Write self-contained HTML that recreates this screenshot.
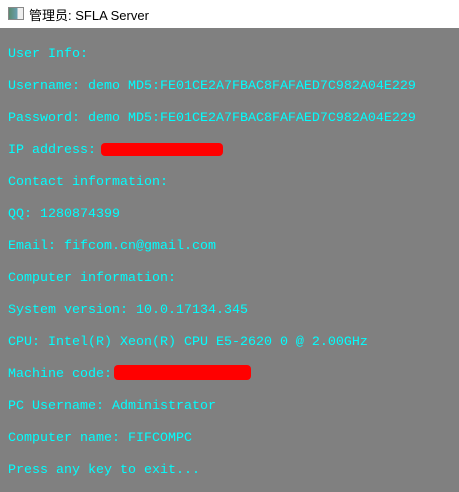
<!DOCTYPE html>
<html><head><meta charset="utf-8"><style>
html,body{margin:0;padding:0;width:459px;height:492px;overflow:hidden;background:#808080;position:relative}
.tb{position:absolute;left:0;top:0;width:459px;height:28px;background:#fff;font:13px "Liberation Sans","Noto Sans CJK SC",sans-serif;color:#000}
.tb span{position:absolute;left:29px;top:5px;white-space:nowrap}
.ic{position:absolute;left:8px;top:7px;width:14px;height:11px;border:1px solid #888;background:linear-gradient(90deg,#5a8a70 0,#6a9fb0 60%,#eee 60%)}
.l{position:absolute;left:8px;font:13.33px "Liberation Mono",monospace;color:#00ffff;white-space:pre;line-height:16px}
.r{position:absolute;background:#ff0000;border-radius:4px}
</style></head><body>
<div class="tb"><div class="ic"></div><span>管理员:&nbsp;SFLA Server</span></div>
<div class="l" style="top:47px">User Info:</div>
<div class="l" style="top:79px">Username: demo MD5:FE01CE2A7FBAC8FAFAED7C982A04E229</div>
<div class="l" style="top:111px">Password: demo MD5:FE01CE2A7FBAC8FAFAED7C982A04E229</div>
<div class="l" style="top:143px">IP address:</div>
<div class="r" style="left:101px;top:143px;width:122px;height:13px"></div>
<div class="l" style="top:175px">Contact information:</div>
<div class="l" style="top:207px">QQ: 1280874399</div>
<div class="l" style="top:239px">Email: fifcom.cn@gmail.com</div>
<div class="l" style="top:271px">Computer information:</div>
<div class="l" style="top:303px">System version: 10.0.17134.345</div>
<div class="l" style="top:335px">CPU: Intel(R) Xeon(R) CPU E5-2620 0 @ 2.00GHz</div>
<div class="l" style="top:367px">Machine code:</div>
<div class="r" style="left:114px;top:365px;width:137px;height:15px"></div>
<div class="l" style="top:399px">PC Username: Administrator</div>
<div class="l" style="top:431px">Computer name: FIFCOMPC</div>
<div class="l" style="top:463px">Press any key to exit...</div>
</body></html>
